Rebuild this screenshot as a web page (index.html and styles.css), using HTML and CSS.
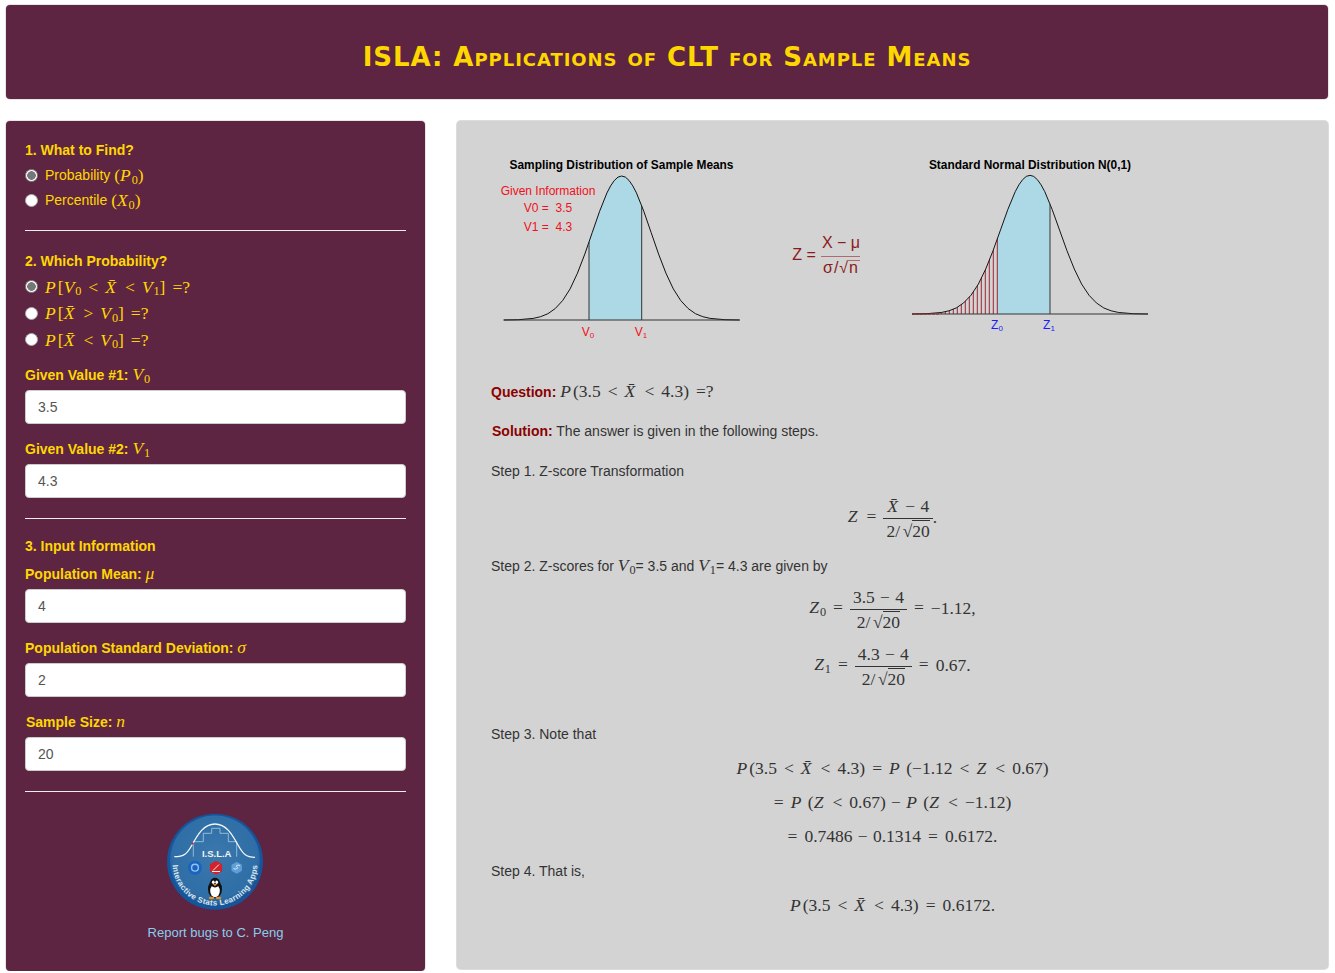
FILE: index.html
```html
<!DOCTYPE html>
<html lang="en">
  <head>
    <meta charset="UTF-8" />
    <title>ISLA: Applications of CLT for Sample Means</title>
    <link rel="stylesheet" href="styles.css">
  </head>
  <body>
    <div class="header">
      <h1 class="title">ISLA: Applications of CLT for Sample Means</h1>
    </div>

    <div class="layout">
      <form class="sidebar">
        <div class="label">1. What to Find?</div>
        <label class="radio"><input type="radio" name="find" checked />Probability <span class="math">(<i>P</i><sub>0</sub>)</span></label>
        <label class="radio"><input type="radio" name="find" />Percentile <span class="math">(<i>X</i><sub>0</sub>)</span></label>
        <hr class="rule rule-first" />

        <div class="label">2. Which Probability?</div>
        <div class="radios">
          <label class="radio radio-math"><input type="radio" name="which" checked /><span class="math"><i>P</i>[<i>V</i><sub>0</sub><span class="rel">&lt;</span><i>X̄</i><span class="rel">&lt;</span><i>V</i><sub>1</sub>]<span class="rel rel-q">=</span>?</span></label>
          <label class="radio radio-math"><input type="radio" name="which" /><span class="math"><i>P</i>[<i>X̄</i><span class="rel">&gt;</span><i>V</i><sub>0</sub>]<span class="rel rel-q">=</span>?</span></label>
          <label class="radio radio-math"><input type="radio" name="which" /><span class="math"><i>P</i>[<i>X̄</i><span class="rel">&lt;</span><i>V</i><sub>0</sub>]<span class="rel rel-q">=</span>?</span></label>
        </div>

        <div class="group">
          <label class="label">Given Value #1: <span class="math"><i>V</i><sub>0</sub></span></label>
          <input class="field" type="text" value="3.5" />
        </div>
        <div class="group">
          <label class="label">Given Value #2: <span class="math"><i>V</i><sub>1</sub></span></label>
          <input class="field" type="text" value="4.3" />
        </div>
        <hr class="rule" />

        <div class="label label-section">3. Input Information</div>
        <div class="group">
          <label class="label">Population Mean: <span class="math"><i>μ</i></span></label>
          <input class="field" type="text" value="4" />
        </div>
        <div class="group">
          <label class="label">Population Standard Deviation: <span class="math"><i>σ</i></span></label>
          <input class="field" type="text" value="2" />
        </div>
        <div class="group">
          <label class="label label-size">Sample Size: <span class="math"><i>n</i></span></label>
          <input class="field" type="text" value="20" />
        </div>
        <hr class="rule" />

        <div class="logo">
          <svg width="97" height="97" viewBox="0 0 97 97">
            <defs>
              <radialGradient id="disc" cx="50%" cy="45%" r="55%">
                <stop offset="0" stop-color="#3a78ad" />
                <stop offset="0.85" stop-color="#2f6ea6" />
                <stop offset="1" stop-color="#1f5a96" />
              </radialGradient>
              <path id="arc" d="M5.500 50A42.500 42.500 0 0 0 90.500 50" />
            </defs>
            <circle cx="48" cy="48.7" r="48" fill="#14559c" />
            <circle cx="48" cy="47.500" r="45" fill="url(#disc)" />
            <path d="M26.300 43.700V28.700H36.300V20.300H44.700V15.300H53V20.300H61.300V28.700H69.700V43.700" fill="none" stroke="#9cc3de" stroke-width="0.9" />
            <path d="M7.300 43.700C17 43.700 20 41 25 32C31 21 37 11 48 11C59 11 65 21 71 32C76 41 79 44.300 88 44.300" fill="none" stroke="#f2f6f9" stroke-width="1.300" />
            <circle cx="25.500" cy="30.500" r="1.200" fill="#a4324a" />
            <text class="logo-name" x="49.700" y="43.500">I.S.L.A</text>
            <circle cx="28" cy="54.700" r="7" fill="#1c62c0" />
            <circle cx="28" cy="54.700" r="3.400" fill="none" stroke="#8fc4ee" stroke-width="1.400" />
            <polygon points="49,47.700 55.100,51.200 55.100,58.200 49,61.700 42.900,58.200 42.900,51.200" fill="#d2232a" />
            <path d="M46 57.500L52 51.500M45 58.500H53" stroke="#fff" stroke-width="0.9" />
            <polygon points="69.700,48.700 74.900,51.700 74.900,57.700 69.700,60.700 64.500,57.700 64.500,51.700" fill="#5f9fd8" />
            <path d="M66.500 55.500C69 57 72 55 70 54C68 53 70 51.500 73 52.500" fill="none" stroke="#e4f0fa" stroke-width="0.9" />
            <text class="logo-ring"><textPath href="#arc" startOffset="50%">Interactive Stats Learning Apps</textPath></text>
            <ellipse cx="48" cy="76" rx="7" ry="9.300" fill="#111" />
            <ellipse cx="48" cy="78" rx="4.800" ry="6.200" fill="#fff" />
            <circle cx="48" cy="69.600" r="4.800" fill="#111" />
            <ellipse cx="46.300" cy="69.300" rx="1.400" ry="1.800" fill="#fff" />
            <ellipse cx="49.700" cy="69.300" rx="1.400" ry="1.800" fill="#fff" />
            <polygon points="45.800,71 50.200,71 48,73.200" fill="#f28a1c" />
            <ellipse cx="44.500" cy="85" rx="2.800" ry="1.200" fill="#f28a1c" />
            <ellipse cx="51.500" cy="85" rx="2.800" ry="1.200" fill="#f28a1c" />
          </svg>
        </div>
        <div class="bugs">Report bugs to C. Peng</div>
      </form>

      <div class="panel">
        <svg class="figure" width="700" height="200" viewBox="480 145 700 200">
          <defs>
            <path id="bell" d="M-118 0L-103.250 -.3L-88.500 -1.600L-81.100 -3.300L-73.750 -6.300L-66.400 -11.500L-59 -19.500L-51.600 -31.100L-44.250 -46.800L-36.900 -65.900L-29.500 -87.300L-22.100 -108.700L-14.750 -127.100L-11.100 -134.100L-7.400 -139.500L-3.700 -142.900L0 -144L3.700 -142.900L7.400 -139.500L11.100 -134.100L14.750 -127.100L22.100 -108.700L29.500 -87.300L36.900 -65.900L44.250 -46.800L51.600 -31.100L59 -19.500L66.400 -11.500L73.750 -6.300L81.100 -3.300L88.500 -1.600L103.250 -.3L118 0" />
            <clipPath id="mid"><rect x="-32.700" y="-150" width="52.700" height="150" /></clipPath>
            <clipPath id="under"><use href="#bell" /></clipPath>
          </defs>

          <text class="plot-title" x="621.500" y="169">Sampling Distribution of Sample Means</text>
          <g transform="translate(621.700 320)">
            <g clip-path="url(#mid)"><use href="#bell" class="area" /></g>
            <use href="#bell" class="curve" />
            <path class="axis" d="M-118 0H118M-32.700 0V-78M20 0V-114" />
          </g>
          <text class="red" x="548" y="195">Given Information</text>
          <text class="red" x="548" y="212">V0 =  3.5</text>
          <text class="red" x="548" y="231">V1 =  4.3</text>
          <text class="red" x="588" y="336">V<tspan class="low" dy="2">0</tspan></text>
          <text class="red" x="641" y="336">V<tspan class="low" dy="2">1</tspan></text>

          <text class="formula" x="804" y="260">Z =</text>
          <text class="formula" x="841" y="248">X − μ</text>
          <path class="formula-bar" d="M821 256.500H860" />
          <text class="formula formula-den" x="841" y="273">σ/√n</text>
          <path class="formula-bar" d="M847 260.500H860" />

          <text class="plot-title" x="1030" y="169">Standard Normal Distribution N(0,1)</text>
          <g transform="translate(1030 314) scale(1 .963)">
            <g clip-path="url(#mid)"><use href="#bell" class="area" /></g>
            <g clip-path="url(#under)">
              <path class="hatch" d="M-32.700 0V-150M-36.700 0V-150M-40.700 0V-150M-44.700 0V-150M-48.700 0V-150M-52.700 0V-150M-56.700 0V-150M-60.700 0V-150M-64.700 0V-150M-68.700 0V-150M-72.700 0V-150M-76.700 0V-150M-80.700 0V-150M-84.700 0V-150M-88.700 0V-150" />
            </g>
            <use href="#bell" class="curve" />
            <path class="axis" d="M-118 0H118M20 0V-114" />
            <path class="hatch hatch-base" d="M-118 0H-90" />
          </g>
          <text class="blue" x="997" y="329">Z<tspan class="low" dy="2">0</tspan></text>
          <text class="blue" x="1049" y="329">Z<tspan class="low" dy="2">1</tspan></text>
        </svg>

        <p class="question"><b class="tag">Question:</b> <span class="math"><i>P</i>(3.5<span class="rel">&lt;</span><i>X̄</i><span class="rel">&lt;</span>4.3)<span class="rel rel-q">=</span>?</span></p>
        <p class="step step-solution"><b class="tag">Solution:</b> The answer is given in the following steps.</p>
        <p class="step step-one">Step 1. Z-score Transformation</p>
        <div class="eq eq-frac eq-z">
          <span class="math"><i>Z</i><span class="rel">=</span><span class="frac"><span class="num"><i>X̄</i><span class="bin">−</span>4</span><span class="den">2/<span class="sqrt">√</span><span class="root">20</span></span></span>.</span>
        </div>
        <p class="step step-two">Step 2. Z-scores for <span class="math"><i>V</i><sub>0</sub></span>= 3.5 and <span class="math"><i>V</i><sub>1</sub></span>= 4.3 are given by</p>
        <div class="eq eq-frac eq-z0">
          <span class="math"><i>Z</i><sub>0</sub><span class="rel">=</span><span class="frac"><span class="num">3.5<span class="bin">−</span>4</span><span class="den">2/<span class="sqrt">√</span><span class="root">20</span></span></span><span class="rel">=</span>−1.12,</span>
        </div>
        <div class="eq eq-frac eq-z1">
          <span class="math"><i>Z</i><sub>1</sub><span class="rel">=</span><span class="frac"><span class="num">4.3<span class="bin">−</span>4</span><span class="den">2/<span class="sqrt">√</span><span class="root">20</span></span></span><span class="rel">=</span>0.67.</span>
        </div>
        <p class="step step-three">Step 3. Note that</p>
        <div class="eq"><span class="math"><i>P</i>(3.5<span class="rel">&lt;</span><i>X̄</i><span class="rel">&lt;</span>4.3)<span class="rel">=</span><i>P</i> (−1.12<span class="rel">&lt;</span><i>Z</i><span class="rel">&lt;</span>0.67)</span></div>
        <div class="eq"><span class="math"><span class="rel rel-end">=</span><i>P</i> (<i>Z</i><span class="rel">&lt;</span>0.67)<span class="bin">−</span><i>P</i> (<i>Z</i><span class="rel">&lt;</span>−1.12)</span></div>
        <div class="eq"><span class="math"><span class="rel rel-end">=</span>0.7486<span class="bin">−</span>0.1314<span class="rel">=</span>0.6172.</span></div>
        <p class="step step-four">Step 4. That is,</p>
        <div class="eq"><span class="math"><i>P</i>(3.5<span class="rel">&lt;</span><i>X̄</i><span class="rel">&lt;</span>4.3)<span class="rel">=</span>0.6172.</span></div>
      </div>
    </div>
  </body>
</html>
```

FILE: styles.css
```css
* {
  box-sizing: border-box;
}
body {
  margin: 0;
  padding: 5px 6px 0;
  font-family: "Liberation Sans", Arial, sans-serif;
  font-size: 14px;
  line-height: 20px;
  color: #333;
  background: #fff;
}
.header {
  height: 94px;
  margin: 0 1px 22px 0;
  display: flex;
  align-items: center;
  justify-content: center;
  background: #5e2542;
  border-radius: 4px;
  box-shadow: 0 0 0 1px #e6e6e6;
}
.title {
  margin: 0 0 -9px;
  font-family: "DejaVu Sans", Verdana, sans-serif;
  font-size: 26px;
  font-weight: bold;
  font-variant: small-caps;
  letter-spacing: .95px;
  line-height: 30px;
  color: #ffd700;
}
.layout {
  display: flex;
  align-items: flex-start;
  gap: 32px;
}

/* left column */
.sidebar {
  flex: 0 0 419px;
  height: 850px;
  padding: 19px 19px;
  background: #5e2542;
  border-radius: 4px;
  box-shadow: 0 0 0 1px #e6e6e6;
  color: #ffd700;
}
.label {
  display: block;
  font-weight: bold;
  height: 20px;
  white-space: nowrap;
}
.label .math {
  font-weight: normal;
  line-height: 0;
}
.label-section {
  margin-bottom: 8px;
}
.label-size {
  padding-left: 1px;
}
.radio {
  display: flex;
  align-items: center;
  height: 25px;
  white-space: pre;
}
.radio:first-of-type {
  margin-top: 2.500px;
}
.radio input {
  appearance: none;
  flex: none;
  width: 13px;
  height: 13px;
  margin: 0 7px 0 0;
  background: #fff;
  border: 1px solid #aaa;
  border-radius: 50%;
}
.radio input:checked {
  background: radial-gradient(circle, #777 0 4px, #fff 4.600px);
  border-color: #888;
}
.radios {
  margin: 2px 0 12px;
}
.radio-math {
  height: 26.500px;
  margin-top: 0;
}
.group {
  margin-bottom: 15px;
}
.group .label {
  margin-bottom: 5px;
}
.field {
  display: block;
  width: 100%;
  height: 34px;
  padding: 6px 12px;
  font: 14px "Liberation Sans", Arial, sans-serif;
  color: #555;
  background: #fff;
  border: 1px solid #ccc;
  border-radius: 4px;
}
.rule {
  height: 1px;
  margin: 20px 0 17px;
  border: 0;
  background: #eee;
}
.rule-first {
  margin: 17.500px 0 20px;
}
.logo {
  display: flex;
  justify-content: center;
  margin-top: 21px;
  height: 97px;
}
.logo-name {
  font: bold 9.500px "Liberation Sans", Arial, sans-serif;
  fill: #f4f4f4;
  text-anchor: middle;
}
.logo-ring {
  font: bold 8px "Liberation Sans", Arial, sans-serif;
  fill: #dbe6ef;
  text-anchor: middle;
  letter-spacing: .3px;
}
.bugs {
  margin-top: 13px;
  font-size: 13px;
  text-align: center;
  color: #87ceeb;
}

/* right column */
.panel {
  flex: 0 0 871px;
  height: 848px;
  padding: 24px 34px 0;
  background: #d3d3d3;
  border-radius: 4px;
  box-shadow: 0 0 0 1px #dcdcdc;
}
.figure {
  display: block;
  margin-left: -11px;
}
.plot-title {
  font: bold 11.900px "Liberation Sans", Arial, sans-serif;
  fill: #000;
  text-anchor: middle;
}
.area {
  fill: #add8e6;
}
.curve {
  fill: none;
  stroke: #111;
  stroke-width: 1;
}
.axis {
  fill: none;
  stroke: #333;
  stroke-width: 1;
}
.hatch {
  fill: none;
  stroke: #a02030;
  stroke-width: 1;
}
.hatch-base {
  stroke-dasharray: 3 1;
}
.red,
.blue {
  font: 12px "Liberation Sans", Arial, sans-serif;
  text-anchor: middle;
  white-space: pre;
}
.red {
  fill: #f01020;
}
.blue {
  fill: #1a1aff;
}
.low {
  font-size: 8px;
}
.formula {
  font: 16px "Liberation Sans", Arial, sans-serif;
  fill: #8b1a1a;
  text-anchor: middle;
}
.formula-den {
  letter-spacing: 1px;
}
.formula-bar {
  stroke: #b06a6a;
  stroke-width: 1;
}
p {
  margin: 0;
}
.tag {
  color: #8b0000;
}
.question {
  height: 30px;
  margin-top: 31px;
  line-height: 30px;
}
.step {
  height: 20px;
  white-space: nowrap;
}
.step .math {
  line-height: 0;
}
.step-solution {
  margin: 15px 0 0 1px;
}
.step-one {
  margin: 20px 0 9px;
}
.step-two {
  margin: 10px 0 5px;
}
.step-three {
  margin: 30px 0 7px;
}
.step-four {
  margin: 8px 0 7px;
}

/* math */
.math {
  font-family: "Liberation Serif", "Times New Roman", serif;
  font-size: 17.500px;
}
.math i {
  margin-right: .12em;
}
.math sub {
  font-size: 70%;
  line-height: 0;
  margin-left: -.1em;
  vertical-align: -.22em;
}
.rel {
  padding: 0 .4em;
}
.rel-q {
  padding-right: 0;
}
.rel-end {
  padding-left: 0;
}
.bin {
  padding: 0 .3em;
}
.eq {
  display: flex;
  align-items: center;
  justify-content: center;
  height: 34px;
  white-space: pre;
}
.eq-frac {
  height: 56px;
}
.eq-z1 {
  margin-top: 1px;
}
.frac {
  display: inline-flex;
  flex-direction: column;
  align-items: center;
  vertical-align: middle;
  line-height: 24px;
}
.num {
  align-self: stretch;
  padding: 0 3px;
  text-align: center;
  border-bottom: 1px solid #333;
}
.den {
  padding: 0 3px;
}
.sqrt {
  padding-left: .15em;
}
.root {
  border-top: 1px solid #333;
}
```
